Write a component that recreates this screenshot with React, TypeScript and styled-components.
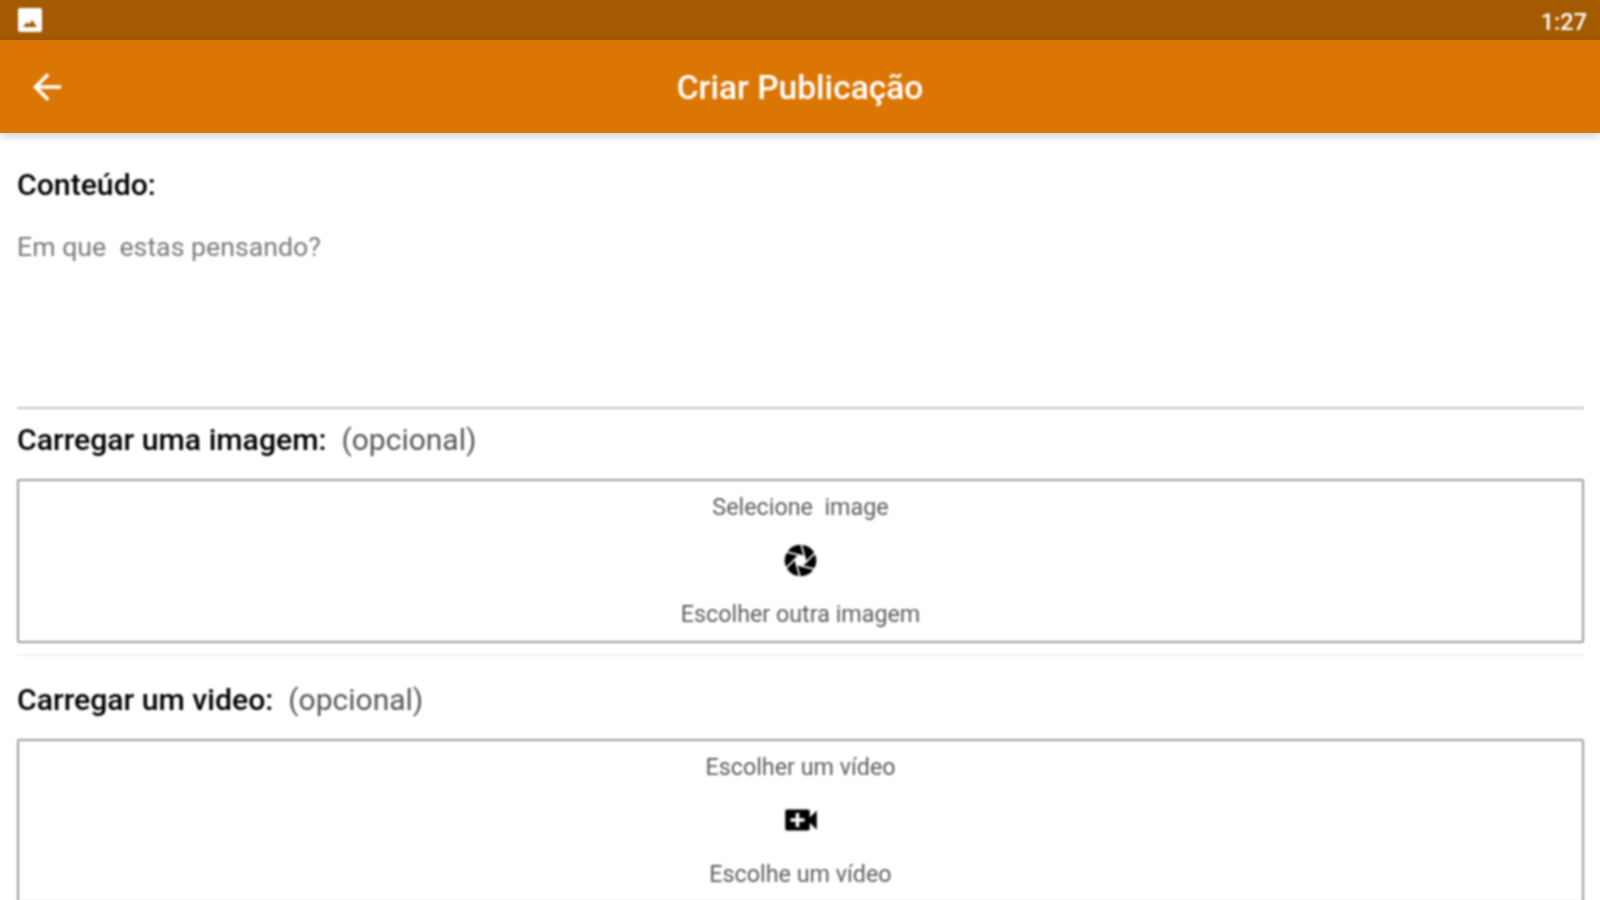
import React from "react";
import styled, { createGlobalStyle } from "styled-components";
import { MdArrowBack, MdVideoCall } from "react-icons/md";

const Global = createGlobalStyle`
  html, body { margin: 0; padding: 0; height: 100%; background: #fff; overflow: hidden; }
  #root { height: 100%; }
`;

const Screen = styled.div`
  width: 1600px;
  height: 900px;
  overflow: hidden;
  display: flex;
  flex-direction: column;
  font-family: Roboto, "Liberation Sans", sans-serif;
  background: #fff;
`;

const StatusBar = styled.div`
  height: 40px;
  flex: none;
  background: #a35a00;
  display: flex;
  align-items: center;
  justify-content: space-between;
  padding: 0 13px 0 17px;
  color: #fff;
`;

const StatusIcon = styled.span`
  display: flex;
  filter: blur(0.8px);
`;

const Clock = styled.span`
  font-size: 23.5px;
  font-weight: 500;
  padding-top: 3px;
  filter: blur(0.8px);
`;

const Toolbar = styled.header`
  height: 93px;
  flex: none;
  background: #db7605;
  box-shadow: 0 3px 8px rgba(0, 0, 0, 0.2);
  display: flex;
  align-items: center;
  justify-content: center;
  color: #fff;
  position: relative;
  z-index: 1;
`;

const BackButton = styled.span`
  position: absolute;
  left: 26px;
  top: 26px;
  display: flex;
  font-size: 42px;
  filter: blur(0.8px);
`;

const Title = styled.h1`
  margin: 0;
  font-size: 33.5px;
  font-weight: 500;
  line-height: 1;
  transform: translateY(1px);
  filter: blur(0.8px);
`;

const Content = styled.main`
  flex: 1;
  display: flex;
  flex-direction: column;
  padding: 0 16px 0 17px;
  filter: blur(0.8px);
`;

const Label = styled.div<{ $top: number; $bottom: number }>`
  font-size: 30.2px;
  font-weight: 500;
  line-height: 34px;
  color: #000;
  margin-top: ${(p) => p.$top}px;
  margin-bottom: ${(p) => p.$bottom}px;
  white-space: pre;
`;

const Optional = styled.span`
  font-size: 30px;
  font-weight: 400;
  color: #555;
`;

const TextArea = styled.div`
  height: 175px;
  font-size: 26.7px;
  line-height: 30px;
  color: #7a7a7a;
  border-bottom: 2px solid #c6c6c6;
  white-space: pre;
`;

const Picker = styled.div`
  flex: none;
  height: 160px;
  border: 2px solid #9c9c9c;
  border-radius: 2px;
  display: flex;
  flex-direction: column;
  align-items: center;
  color: #5c5c5c;
  font-size: 23.3px;
  line-height: 28px;
  white-space: pre;
`;

const PickerTop = styled.div`
  margin-top: 12px;
`;

const PickerIcon = styled.div<{ $nudge: number }>`
  height: 35px;
  margin: ${(p) => 21 + p.$nudge}px 0 ${(p) => 23 - p.$nudge}px;
  display: flex;
  align-items: center;
  justify-content: center;
  color: #000;
`;

const Rule = styled.div`
  height: 2px;
  flex: none;
  background: #f2f2f2;
  margin-top: 11px;
`;

function ImageGlyph() {
  return (
    <svg width="26" height="26" viewBox="0 0 26 26" aria-hidden="true">
      <rect x="1" y="1" width="24" height="24" rx="2" fill="#fff" />
      <path d="M6 20l4-5 2 2.5 3-4.5 5 7z" fill="#a35a00" />
    </svg>
  );
}

function ApertureGlyph() {
  return (
    <svg width="35" height="35" viewBox="-17 -17 34 34" aria-hidden="true">
      {[0, 60, 120, 180, 240, 300].map((a) => (
        <path
          key={a}
          transform={`rotate(${a + 15})`}
          d="M5.5 0L11.76-10.84A16 16 0 0 1 15.26 4.76L2.75 4.76Z"
          fill="#000"
          stroke="#fff"
          strokeWidth="1.4"
          strokeLinejoin="round"
        />
      ))}
    </svg>
  );
}

export default function App() {
  return (
    <Screen>
      <Global />
      <StatusBar>
        <StatusIcon>
          <ImageGlyph />
        </StatusIcon>
        <Clock>1:27</Clock>
      </StatusBar>
      <Toolbar>
        <BackButton>
          <MdArrowBack />
        </BackButton>
        <Title>Criar Publicação</Title>
      </Toolbar>
      <Content>
        <Label $top={35} $bottom={30}>Conteúdo:</Label>
        <TextArea>Em que  estas pensando?</TextArea>
        <Label $top={14} $bottom={22}>
          Carregar uma imagem:  <Optional>(opcional)</Optional>
        </Label>
        <Picker>
          <PickerTop>Selecione  image</PickerTop>
          <PickerIcon $nudge={1}>
            <ApertureGlyph />
          </PickerIcon>
          <div>Escolher outra imagem</div>
        </Picker>
        <Rule />
        <Label $top={27} $bottom={22}>
          Carregar um video:  <Optional>(opcional)</Optional>
        </Label>
        <Picker>
          <PickerTop>Escolher um vídeo</PickerTop>
          <PickerIcon $nudge={0}>
            <MdVideoCall size={42} />
          </PickerIcon>
          <div>Escolhe um vídeo</div>
        </Picker>
      </Content>
    </Screen>
  );
}
